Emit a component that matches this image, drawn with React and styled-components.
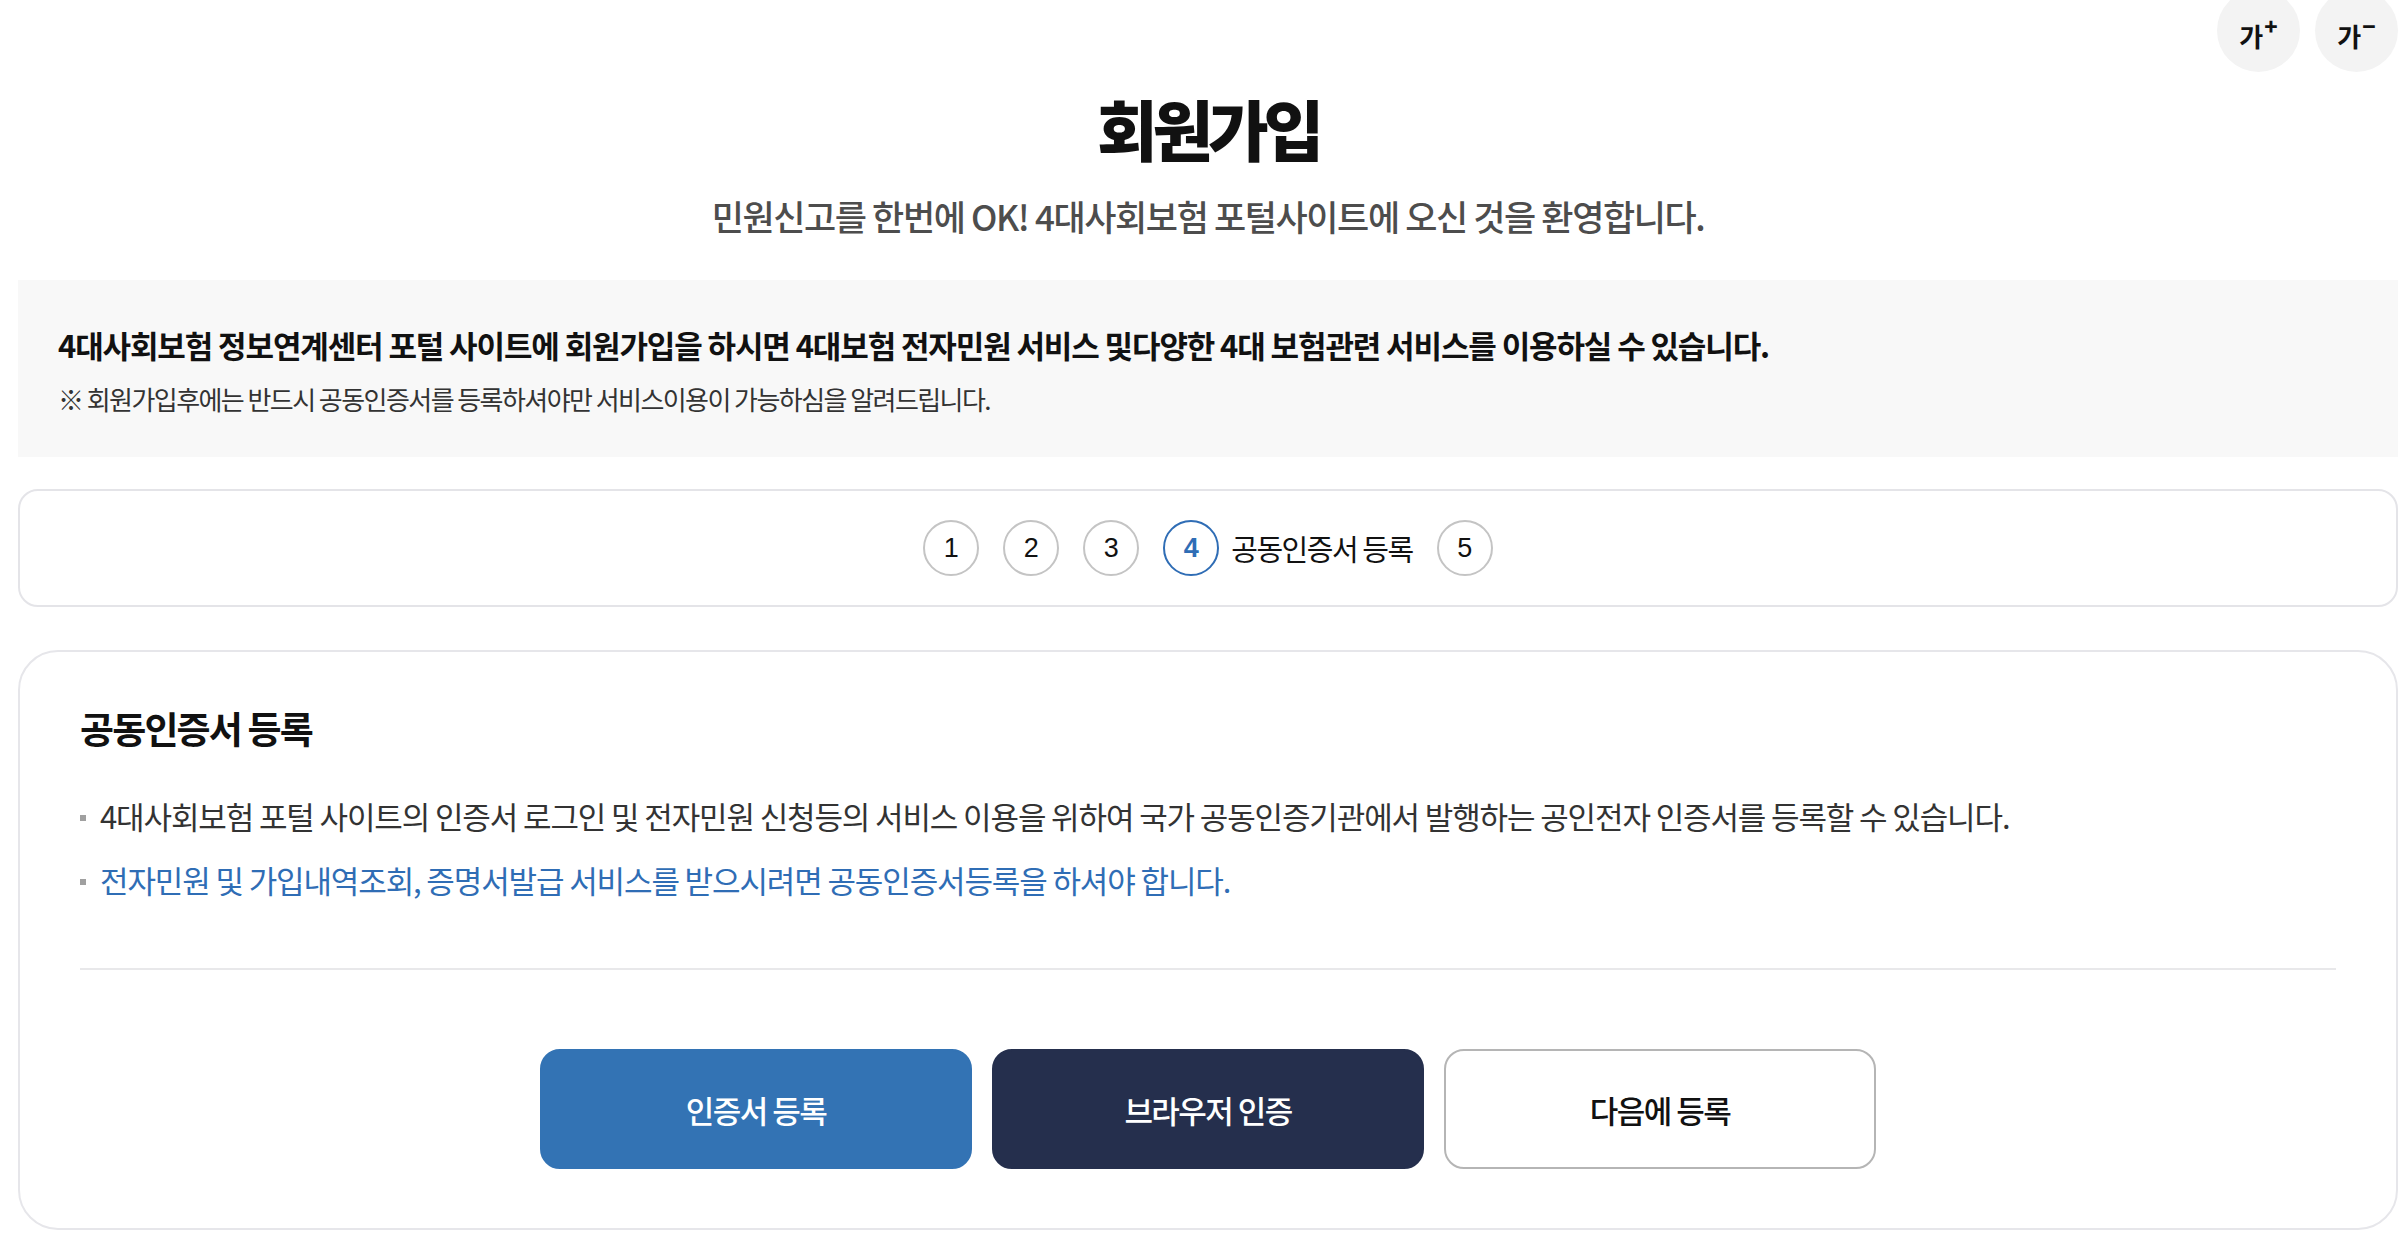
import React from "react";
import styled, { createGlobalStyle } from "styled-components";

const GlobalStyle = createGlobalStyle`
  html, body { margin: 0; padding: 0; background: #fff; }
  body {
    font-family: "Noto Sans CJK KR", "Noto Sans", sans-serif;
    color: #111;
    letter-spacing: -0.07em;
  }
  * { box-sizing: border-box; }
`;

const Page = styled.div`
  padding: 0 6px 0 18px;
  display: flex;
  flex-direction: column;
`;

const FontTools = styled.div`
  display: flex;
  justify-content: flex-end;
  gap: 15px;
  margin-top: -11px;
  height: 83px;
`;

const FontButton = styled.button`
  width: 83px;
  height: 83px;
  border-radius: 50%;
  border: none;
  background: #f3f3f3;
  font-family: "Noto Sans CJK KR", sans-serif;
  font-weight: 700;
  font-size: 26px;
  color: #111;
  padding: 10px 0 0 0;
  display: flex;
  align-items: center;
  justify-content: center;
  letter-spacing: 0;
  cursor: pointer;
`;

const Sup = styled.span`
  font-size: 22px;
  font-weight: 900;
  position: relative;
  top: -11px;
  margin-left: 1px;
`;

const Title = styled.h1`
  margin: 18px 0 0;
  text-align: center;
  font-size: 66px;
  line-height: 74px;
  font-weight: 800;
  letter-spacing: -0.08em;
  color: #111;
`;

const Subtitle = styled.p`
  margin: 29px 0 0;
  text-align: center;
  font-size: 35px;
  line-height: 46px;
  font-weight: 500;
  letter-spacing: -0.04em;
  color: #4d4d4d;
`;

const InfoBox = styled.div`
  margin-top: 41px;
  background: #f8f8f8;
  padding: 44px 40px 41px;
  display: flex;
  flex-direction: column;
  gap: 16px;
`;

const InfoLead = styled.p`
  margin: 0;
  font-size: 31px;
  line-height: 42px;
  font-weight: 700;
  color: #111;
`;

const InfoNote = styled.p`
  margin: 0;
  font-size: 26px;
  line-height: 34px;
  font-weight: 400;
  letter-spacing: -0.06em;
  color: #333;
`;

const StepBar = styled.div`
  margin-top: 32px;
  height: 118px;
  border: 2px solid #e4e4e8;
  border-radius: 20px;
  display: flex;
  align-items: center;
  justify-content: center;
  gap: 24px;
`;

const StepItem = styled.div`
  display: flex;
  align-items: center;
  gap: 12px;
`;

const StepCircle = styled.span`
  width: 56px;
  height: 56px;
  border-radius: 50%;
  border: 2px solid ${(p) => (p.$active ? "#2f6db5" : "#c4c4c4")};
  display: flex;
  align-items: center;
  justify-content: center;
  font-family: "Liberation Sans", Arial, sans-serif;
  font-size: 27px;
  letter-spacing: 0;
  font-weight: ${(p) => (p.$active ? 700 : 400)};
  color: ${(p) => (p.$active ? "#2f6db5" : "#111")};
`;

const StepLabel = styled.span`
  font-size: 29px;
  line-height: 40px;
  font-weight: 400;
  letter-spacing: -0.05em;
  color: #111;
`;

const Card = styled.section`
  margin-top: 43px;
  border: 2px solid #e6e6ea;
  border-radius: 40px;
  padding: 52px 60px 59px;
  display: flex;
  flex-direction: column;
`;

const CardTitle = styled.h2`
  margin: 0;
  font-size: 37px;
  line-height: 49px;
  font-weight: 700;
  letter-spacing: -0.05em;
  color: #111;
`;

const BulletList = styled.ul`
  list-style: none;
  margin: 42px 0 0;
  padding: 0;
  display: flex;
  flex-direction: column;
  gap: 22px;
`;

const Bullet = styled.li`
  display: flex;
  align-items: center;
  font-size: 31px;
  line-height: 42px;
  font-weight: 400;
  color: ${(p) => (p.$accent ? "#2f6db5" : "#333")};
  &::before {
    content: "";
    width: 6px;
    height: 6px;
    background: #a0a0a0;
    margin: 4px 14px 0 0;
    flex: none;
  }
`;

const Divider = styled.hr`
  margin: 67px 0 0;
  border: none;
  border-top: 2px solid #e8e8ea;
`;

const ButtonRow = styled.div`
  margin-top: 79px;
  display: flex;
  justify-content: center;
  gap: 20px;
`;

const variants = {
  primary: "background:#3373b4;color:#fff;border:2px solid #3373b4;",
  dark: "background:#252f4d;color:#fff;border:2px solid #252f4d;",
  outline: "background:#fff;color:#111;border:2px solid #b5b5b5;",
};

const ActionButton = styled.button`
  width: 432px;
  height: 120px;
  border-radius: 20px;
  font-family: "Noto Sans CJK KR", sans-serif;
  font-size: 31px;
  font-weight: 500;
  letter-spacing: -0.05em;
  cursor: pointer;
  ${(p) => variants[p.$variant]}
`;

export default function App() {
  const steps = [1, 2, 3, 4, 5];
  return (
    <>
      <GlobalStyle />
      <Page>
        <FontTools>
          <FontButton aria-label="글자 크게">
            가<Sup>+</Sup>
          </FontButton>
          <FontButton aria-label="글자 작게">
            가<Sup>−</Sup>
          </FontButton>
        </FontTools>
        <Title>회원가입</Title>
        <Subtitle>민원신고를 한번에 OK! 4대사회보험 포털사이트에 오신 것을 환영합니다.</Subtitle>
        <InfoBox>
          <InfoLead>
            4대사회보험 정보연계센터 포털 사이트에 회원가입을 하시면 4대보험 전자민원 서비스 및다양한 4대 보험관련 서비스를 이용하실 수 있습니다.
          </InfoLead>
          <InfoNote>※ 회원가입후에는 반드시 공동인증서를 등록하셔야만 서비스이용이 가능하심을 알려드립니다.</InfoNote>
        </InfoBox>
        <StepBar>
          {steps.map((n) => (
            <StepItem key={n}>
              <StepCircle $active={n === 4}>{n}</StepCircle>
              {n === 4 && <StepLabel>공동인증서 등록</StepLabel>}
            </StepItem>
          ))}
        </StepBar>
        <Card>
          <CardTitle>공동인증서 등록</CardTitle>
          <BulletList>
            <Bullet>
              4대사회보험 포털 사이트의 인증서 로그인 및 전자민원 신청등의 서비스 이용을 위하여 국가 공동인증기관에서 발행하는 공인전자 인증서를 등록할 수 있습니다.
            </Bullet>
            <Bullet $accent>전자민원 및 가입내역조회, 증명서발급 서비스를 받으시려면 공동인증서등록을 하셔야 합니다.</Bullet>
          </BulletList>
          <Divider />
          <ButtonRow>
            <ActionButton $variant="primary">인증서 등록</ActionButton>
            <ActionButton $variant="dark">브라우저 인증</ActionButton>
            <ActionButton $variant="outline">다음에 등록</ActionButton>
          </ButtonRow>
        </Card>
      </Page>
    </>
  );
}
